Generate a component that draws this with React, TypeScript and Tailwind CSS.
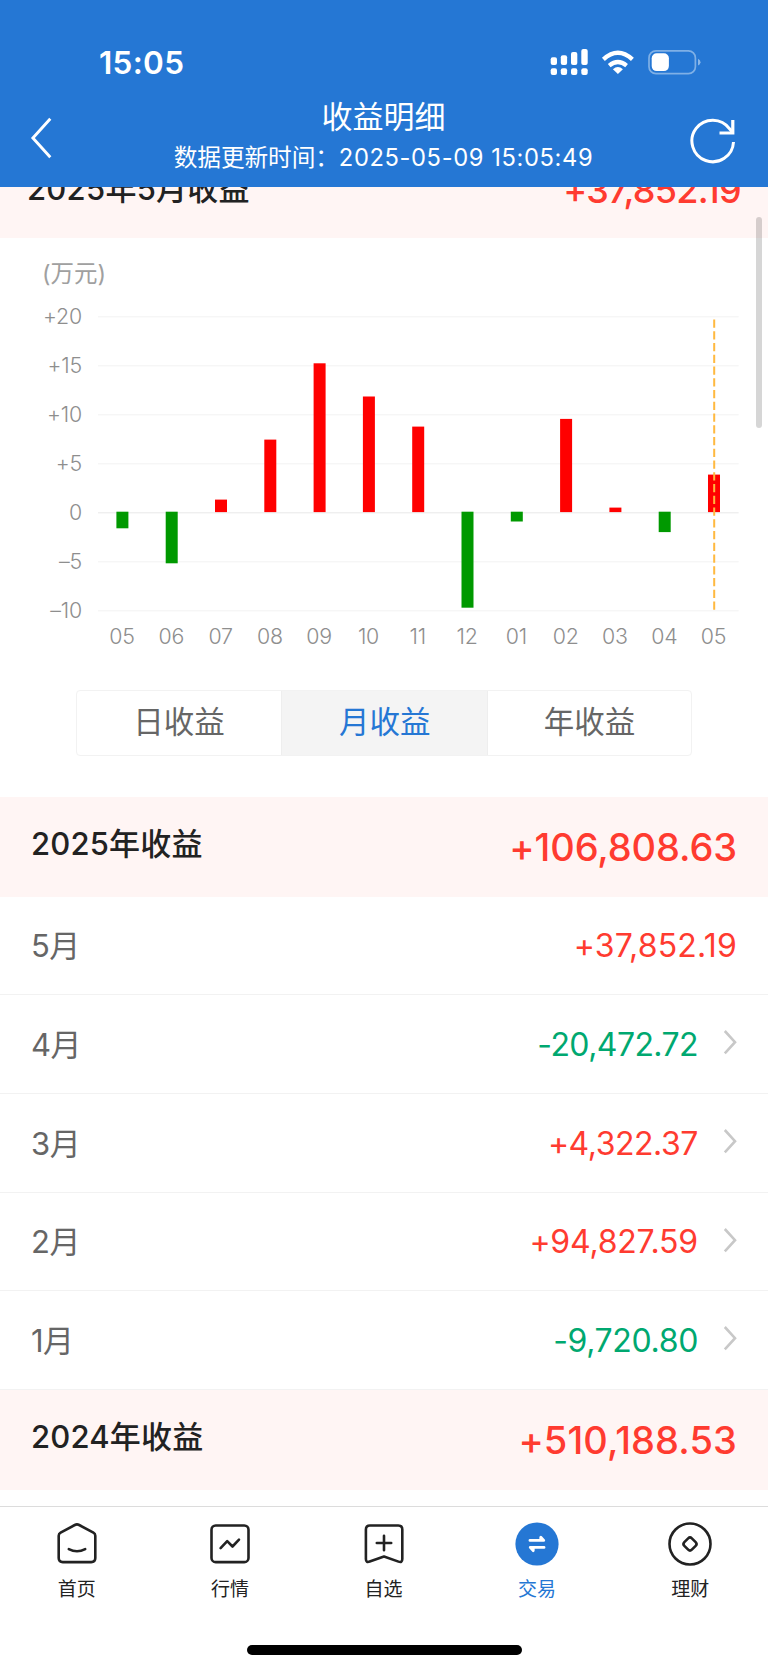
import React from "react";

type Row = { label: string; value: string; link: boolean; tracking: string };

const GRID = [
  { y: 316.5, label: "+20" },
  { y: 365.5, label: "+15" },
  { y: 414.5, label: "+10" },
  { y: 463.5, label: "+5" },
  { y: 512.5, label: "0" },
  { y: 561.5, label: "–5" },
  { y: 610.5, label: "–10" },
];

const BARS = [
  { month: "05", end: 528 },
  { month: "06", end: 563 },
  { month: "07", end: 499.3 },
  { month: "08", end: 439.3 },
  { month: "09", end: 363 },
  { month: "10", end: 396.2 },
  { month: "11", end: 426.3 },
  { month: "12", end: 607.4 },
  { month: "01", end: 521.2 },
  { month: "02", end: 418.6 },
  { month: "03", end: 507.3 },
  { month: "04", end: 531.8 },
  { month: "05", end: 474.3 },
];

const ROWS: Row[] = [
  { label: "5月", value: "+37,852.19", link: false, tracking: "tracking-[0.2px]" },
  { label: "4月", value: "-20,472.72", link: true, tracking: "tracking-[-0.58px]" },
  { label: "3月", value: "+4,322.37", link: true, tracking: "tracking-[-0.45px]" },
  { label: "2月", value: "+94,827.59", link: true, tracking: "tracking-[-0.2px]" },
  { label: "1月", value: "-9,720.80", link: true, tracking: "tracking-[-0.35px]" },
];

function StatusBar() {
  return (
    <div className="flex h-[96px] items-start justify-between pt-[42px] pl-[99px] pr-[66px]">
      <div className="text-[31.5px] leading-[42px] font-semibold tracking-[0.3px]">15:05</div>
      <svg className="mt-[6px]" width="152" height="30" viewBox="550 48 152 30" fill="#fff">
        <rect x="550.7" y="57.3" width="6.3" height="7.7" rx="2" />
        <rect x="560.8" y="55.3" width="6.3" height="9.7" rx="2" />
        <rect x="571" y="52" width="6.3" height="13" rx="2" />
        <rect x="581.3" y="49" width="6.4" height="16" rx="2" />
        <rect x="550.7" y="68.2" width="6.3" height="6.8" rx="2" />
        <rect x="560.8" y="68.2" width="6.3" height="6.8" rx="2" />
        <rect x="571" y="68.2" width="6.3" height="6.8" rx="2" />
        <rect x="581.3" y="68.2" width="6.4" height="6.8" rx="2" />
        <path d="M617.9 73.9 L612.9 69.2 Q617.9 64.9 622.9 69.2 Z" />
        <path d="M609.2 65.6 Q617.9 58.4 626.6 65.6" fill="none" stroke="#fff" strokeWidth="4.2" />
        <path d="M603.4 59.4 Q617.9 46.2 632.4 59.4" fill="none" stroke="#fff" strokeWidth="4.3" />
        <rect x="649" y="50.9" width="46.4" height="22.8" rx="7" fill="none" stroke="#7fb0e6" strokeWidth="1.7" />
        <rect x="651.7" y="53.3" width="17.2" height="17.8" rx="5" />
        <path d="M698 58.8 Q700.5 60 700.5 62.2 Q700.5 64.4 698 65.6 Z" fill="#8ab7e8" />
      </svg>
    </div>
  );
}

function Header() {
  return (
    <header className="relative z-10 h-[186.7px] bg-[#2577d4] text-white">
      <StatusBar />
      <div className="flex h-[90px] items-start justify-between pr-[31px] pl-[30px]">
        <svg className="mt-[20px]" width="48" height="44" viewBox="30 116 48 44" fill="none" stroke="#fff" strokeWidth="2.9">
          <path d="M50.3 118.8 L32.9 138 L50.3 157.2" />
        </svg>
        <div className="flex flex-col items-center">
          <h1 className="text-[31px] leading-[42px] font-normal">收益明细</h1>
          <p className="pt-px text-[23.7px] leading-[38px] whitespace-pre">
            <span className="tracking-[-0.1px]">数据更新时间：</span>
            <span className="tracking-[0.62px]">2025-05-09 15:05:49</span>
          </p>
        </div>
        <svg className="mt-[20px]" width="48" height="50" viewBox="688 116 48 50" fill="none" stroke="#fff" strokeWidth="3">
          <path d="M732.5 142 A20.8 20.8 0 1 1 728.6 128.8 L732 133" />
          <path d="M731.8 120 V133 H718.5" strokeWidth="3.2" />
        </svg>
      </div>
    </header>
  );
}

function Chart() {
  return (
    <svg className="block h-[452.6px] w-full" viewBox="0 237.7 768 452.6">
      <text x="42" y="282" fontSize="23.5" fill="#a0a0a0">(万元)</text>
      {GRID.map((g) => (
        <g key={g.label}>
          <line x1="98" x2="738.6" y1={g.y} y2={g.y} stroke={g.label === "0" ? "#e8e8e8" : "#f2f2f2"} strokeWidth="1" />
          <text x="82" y={g.y + 7} textAnchor="end" fontSize="21.4" fill="#8e8e8e" className="font-light" letterSpacing="-0.2">{g.label}</text>
        </g>
      ))}
      {BARS.map((b, i) => {
        const cx = 122.4 + i * 49.3;
        const up = b.end < 511;
        return (
          <g key={i}>
            <rect x={cx - 6} width="12" y={up ? b.end : 511.4} height={Math.abs(b.end - (up ? 511.8 : 511.4))} fill={up ? "#ff0000" : "#009900"} />
            <text x={cx - 0.4} y="644" textAnchor="middle" fontSize="21.4" fill="#8e8e8e" className="font-light" letterSpacing="-0.2">{b.month}</text>
          </g>
        );
      })}
      <line x1="714.2" x2="714.2" y1="319.2" y2="610" stroke="#ffb940" strokeWidth="2" strokeDasharray="8.2 3.55" />
    </svg>
  );
}

function Segments() {
  return (
    <div className="ml-[76px] flex h-[65.4px] w-[616.4px] overflow-hidden rounded-[4px] border border-[#f2f2f2] text-[30.5px] leading-[62px] text-[#666]">
      <div className="flex-1 text-center">日收益</div>
      <div className="flex-1 border-x border-[#eeeeee] bg-[#f4f4f4] pl-px text-center text-[#2577d4]">月收益</div>
      <div className="flex-1 text-center">年收益</div>
    </div>
  );
}

function YearBand({ label, value, tracking }: { label: string; value: string; tracking: string }) {
  return (
    <div className="flex h-[100.2px] shrink-0 items-start justify-between bg-[#fff5f4] pr-[31px] pl-[31px]">
      <span className="pt-[24.5px] text-[31px] leading-[46px] font-medium tracking-[0.18px] text-[#222]">{label}</span>
      <span className={`pt-[26px] text-[38px] leading-[48px] font-medium text-[#ff3b30] ${tracking}`}>{value}</span>
    </div>
  );
}

function MonthRow({ row }: { row: Row }) {
  const color = row.value.startsWith("+") ? "text-[#ff3b30]" : "text-[#00a870]";
  return (
    <div className="flex h-[98.6px] shrink-0 items-start border-b border-[#f2f2f2] pr-[31px] pl-[31px]">
      <span className="flex-1 pt-[26.5px] text-[31px] leading-[46px] tracking-[-0.5px] text-[#666]">{row.label}</span>
      <span className={`pt-[26.5px] text-[32px] leading-[46px] ${color} ${row.tracking}`}>{row.value}</span>
      {row.link && (
        <svg className="mt-[34px] ml-[25px]" width="14" height="26" viewBox="0 0 14 26" fill="none" stroke="#c8c8c8" strokeWidth="2.6">
          <path d="M1.8 2 L12 13.2 L1.8 24.4" />
        </svg>
      )}
    </div>
  );
}

const TABS = [
  {
    label: "首页",
    icon: (
      <g>
        <path d="M4.7 14.7 Q4.7 12.6 6.6 11.6 L20.8 4 Q23 2.8 25.2 4 L39.4 11.6 Q41.3 12.6 41.3 14.7 V37 Q41.3 41.1 37.2 41.1 H8.8 Q4.7 41.1 4.7 37 Z" />
        <path d="M14.8 28.2 Q23 32.4 31.2 28.2" />
      </g>
    ),
  },
  {
    label: "行情",
    icon: (
      <g>
        <rect x="4.5" y="4.5" width="37" height="36.6" rx="4.2" />
        <path d="M13.6 27.1 L20.2 20.1 L25.5 25.5 L32 18.7" />
      </g>
    ),
  },
  {
    label: "自选",
    icon: (
      <g>
        <path d="M4.9 8.5 Q4.9 4.5 8.9 4.5 H37.3 Q41.3 4.5 41.3 8.5 V38 Q41.3 42 37.5 40.6 L23 35.6 L8.7 40.6 Q4.9 42 4.9 38 Z" />
        <path d="M23 14.8 V29.2 M15.8 22 H30.2" />
      </g>
    ),
  },
  {
    label: "交易",
    icon: (
      <g>
        <circle cx="23" cy="23" r="21.6" fill="#2577d4" stroke="none" />
        <path d="M16 19.4 H29.7 L26.8 16.2 V19.4" stroke="#fff" strokeWidth="2.9" />
        <path d="M30 26.4 H16.3 L19.2 29.6 V26.4" stroke="#fff" strokeWidth="2.9" />
      </g>
    ),
  },
  {
    label: "理财",
    icon: (
      <g>
        <circle cx="23" cy="23" r="20.5" />
        <rect x="17.7" y="17.7" width="10.6" height="10.6" rx="2.6" transform="rotate(45 23 23)" />
      </g>
    ),
  },
];

function TabBar() {
  return (
    <nav className="relative flex h-[164px] shrink-0 border-t border-[#dcdcdc] bg-white pr-px">
      {TABS.map((t) => (
        <div key={t.label} className={`flex flex-1 flex-col items-center pt-[14px] ${t.label === "交易" ? "text-[#2577d4]" : "text-[#222]"}`}>
          <svg width="46" height="46" viewBox="0 0 46 46" fill="none" stroke="#222" strokeWidth="2.6" strokeLinecap="round" strokeLinejoin="round">
            {t.icon}
          </svg>
          <span className="mt-[9px] text-[19px] leading-[28px]">{t.label}</span>
        </div>
      ))}
      <div className="absolute top-[137.7px] left-[246.5px] h-[10px] w-[275px] rounded-full bg-black" />
    </nav>
  );
}

export default function App() {
  return (
    <div className="relative flex h-[1670px] w-[768px] flex-col overflow-hidden bg-white font-['Inter','Noto_Sans_CJK_SC',sans-serif]">
      <Header />
      <main className="h-[1319.3px] overflow-hidden">
        <div className="-mt-[49px] flex h-[100px] items-start justify-between bg-[#fff5f4] pr-[27px] pl-[27px]">
          <span className="pt-[28px] text-[31px] leading-[46px] font-medium tracking-[0.25px] text-[#222]">2025年5月收益</span>
          <span className="pt-[28px] text-[36px] leading-[48px] font-medium tracking-[-0.7px] text-[#ff3b30]">+37,852.19</span>
        </div>
        <Chart />
        <Segments />
        <div className="mt-[41px] flex flex-col">
          <YearBand label="2025年收益" value="+106,808.63" tracking="tracking-[-0.1px]" />
          {ROWS.map((r) => (
            <MonthRow key={r.label} row={r} />
          ))}
          <YearBand label="2024年收益" value="+510,188.53" tracking="tracking-[0.1px]" />
        </div>
      </main>
      <TabBar />
      <div className="absolute top-[216.5px] left-[756px] z-20 h-[211.5px] w-[6px] rounded-full bg-black/16" />
    </div>
  );
}
